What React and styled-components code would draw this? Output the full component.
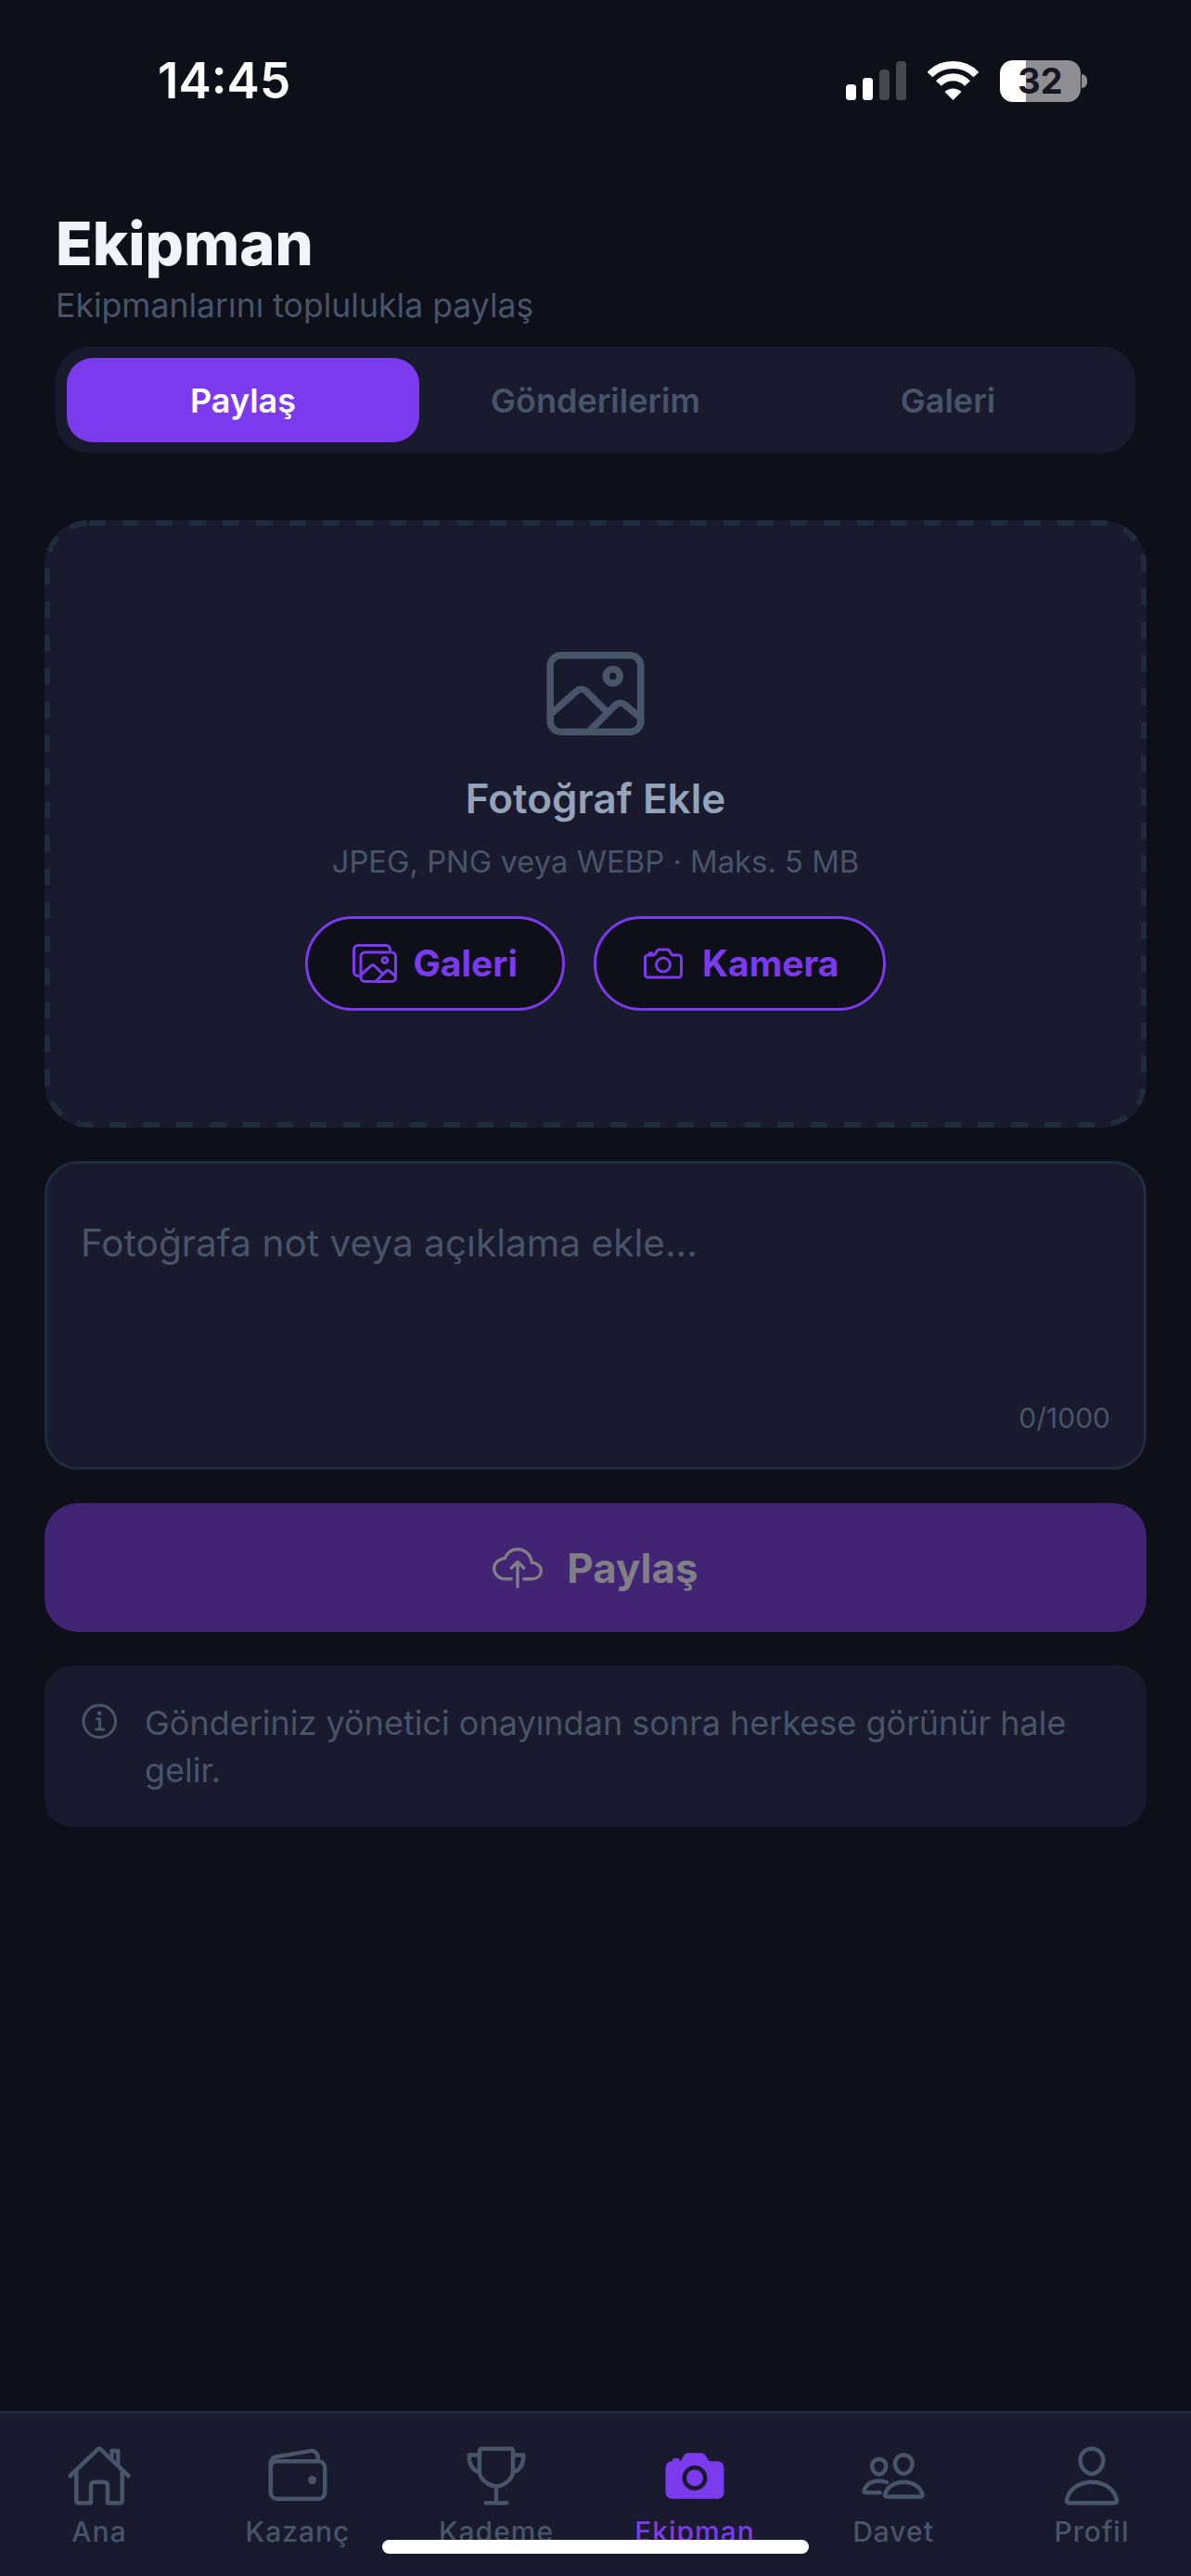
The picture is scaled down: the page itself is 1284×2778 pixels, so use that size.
import React from 'react'
import styled, { createGlobalStyle } from 'styled-components'
import {
  IoImageOutline,
  IoImagesOutline,
  IoCameraOutline,
  IoCloudUploadOutline,
  IoInformationCircleOutline,
  IoHomeOutline,
  IoWalletOutline,
  IoTrophyOutline,
  IoCamera,
  IoPeopleOutline,
  IoPersonOutline,
} from 'react-icons/io5'

const GlobalStyle = createGlobalStyle`
  * { box-sizing: border-box; }
  body {
    margin: 0;
    background: #0f0f1a;
    font-family: Inter, "Noto Sans", sans-serif;
  }
`

const Screen = styled.div`
  position: relative;
  width: 1284px;
  height: 2778px;
  display: flex;
  flex-direction: column;
  overflow: hidden;
  background: #0f0f1a;
`

//status bar
const StatusBar = styled.div`
  height: 174px;
  flex-shrink: 0;
  display: flex;
  align-items: center;
  justify-content: space-between;
  padding: 0 112px 0 170px;
`
const Time = styled.div`
  font-size: 53px;
  font-weight: 600;
  color: #fff;
`
const StatusIcons = styled.div`
  display: flex;
  align-items: center;
  gap: 22px;
`
const Battery = styled.div`
  display: flex;
  align-items: center;
  gap: 1px;
`
const BatteryBody = styled.div`
  width: 87px;
  height: 45px;
  border-radius: 14px;
  background: linear-gradient(90deg, #fff 32%, #8e8e93 32%);
  display: flex;
  align-items: center;
  justify-content: center;
  font-size: 38px;
  font-weight: 700;
  color: #15161f;
`
const BatteryCap = styled.div`
  width: 6px;
  height: 15px;
  border-radius: 0 6px 6px 0;
  background: #8e8e93;
`

//header
const Header = styled.div`
  padding: 51px 60px 22px;
`
const Title = styled.h1`
  margin: 0;
  font-size: 65px;
  line-height: 76px;
  font-weight: 800;
  color: #f1f5f9;
`
const Subtitle = styled.p`
  margin: 7px 0 0;
  font-size: 35.6px;
  line-height: 44px;
  color: #475569;
`

//tabs
const Tabs = styled.div`
  margin: 0 60px;
  height: 115px;
  padding: 12px;
  display: flex;
  border-radius: 36px;
  background: #1a1a2e;
`
const Tab = styled.div`
  flex: 1;
  display: flex;
  align-items: center;
  justify-content: center;
  border-radius: 28px;
  font-size: 36px;
  font-weight: 600;
  color: ${(p) => (p.$active ? '#fff' : '#475569')};
  background: ${(p) => (p.$active ? '#7c3aed' : 'transparent')};
`

//form
const Form = styled.div`
  margin-top: 72px;
  padding: 0 48px;
  display: flex;
  flex-direction: column;
  gap: 36px;
`
const Upload = styled.div`
  position: relative;
  height: 655px;
  display: flex;
  flex-direction: column;
  align-items: center;
  justify-content: center;
  border-radius: 48px;
  background: #1a1a2e;
  color: #475569;
`
const DashedEdge = styled.svg`
  position: absolute;
  inset: 0;
  width: 100%;
  height: 100%;
  pointer-events: none;
`
const UploadTitle = styled.div`
  margin-top: 25px;
  font-size: 44px;
  line-height: 56px;
  font-weight: 600;
  color: #94a3b8;
`
const UploadHint = styled.div`
  margin-top: 18px;
  font-size: 32.8px;
  line-height: 44px;
  color: #475569;
`
const UploadButtons = styled.div`
  margin-top: 37px;
  display: flex;
  gap: 31px;
`
const PickButton = styled.div`
  height: 102px;
  padding: 0 48px;
  display: flex;
  align-items: center;
  gap: 18px;
  border: 3px solid #7c3aed;
  border-radius: 51px;
  background: #0f0f1a;
  color: #7c3aed;
  font-size: 39px;
  font-weight: 700;
`
const Note = styled.div`
  height: 333px;
  padding: 58px 36px 33px;
  display: flex;
  flex-direction: column;
  justify-content: space-between;
  border: 3px solid #1e2d3d;
  border-radius: 36px;
  background: #1a1a2e;
`
const Placeholder = styled.div`
  font-size: 40.6px;
  line-height: 56px;
  color: #475569;
`
const Counter = styled.div`
  align-self: flex-end;
  font-size: 30px;
  line-height: 40px;
  color: #475569;
`
const ShareButton = styled.div`
  height: 139px;
  display: flex;
  align-items: center;
  justify-content: center;
  gap: 26px;
  border-radius: 36px;
  background: #412474;
  color: #807f85;
  font-size: 44px;
  font-weight: 700;
`
const Info = styled.div`
  display: flex;
  gap: 24px;
  padding: 37px 36px 35px;
  border-radius: 30px;
  background: #1a1a2e;
  color: #475569;
`
const InfoText = styled.div`
  font-size: 36px;
  line-height: 51px;
`

//bottom nav
const Nav = styled.div`
  margin-top: auto;
  height: 178px;
  padding-top: 31px;
  display: flex;
  border-top: 3px solid #1e2d3d;
  background: #1a1a2e;
`
const NavItem = styled.div`
  flex: 1;
  display: flex;
  flex-direction: column;
  align-items: center;
  color: ${(p) => (p.$active ? '#7c3aed' : '#475569')};
`
const NavLabel = styled.div`
  margin-top: 4px;
  font-size: 30px;
  line-height: 40px;
  font-weight: 500;
  letter-spacing: 1px;
`
const HomeIndicator = styled.div`
  position: absolute;
  left: 412px;
  bottom: 24px;
  width: 460px;
  height: 15px;
  border-radius: 8px;
  background: #fff;
`

const SignalIcon = () => (
  <svg width="65" height="42" viewBox="0 0 65 42">
    <rect x="0" y="25" width="11" height="17" rx="3.5" fill="#fff" />
    <rect x="18" y="18" width="11" height="24" rx="3.5" fill="#fff" />
    <rect x="36" y="9" width="11" height="33" rx="3.5" fill="#47474f" />
    <rect x="54" y="0" width="11" height="42" rx="3.5" fill="#47474f" />
  </svg>
)

const WifiIcon = () => (
  <svg width="57" height="42" viewBox="0 0 57 42">
    <path d="M3.5 14.5a35 35 0 0 1 50 0" fill="none" stroke="#fff" strokeWidth="8" />
    <path d="M13 24a21 21 0 0 1 31 0" fill="none" stroke="#fff" strokeWidth="8" />
    <path d="M19.5 33a13 13 0 0 1 18 0L28.5 42z" fill="#fff" />
  </svg>
)

const navItems = [
  { label: 'Ana', icon: IoHomeOutline },
  { label: 'Kazanç', icon: IoWalletOutline },
  { label: 'Kademe', icon: IoTrophyOutline },
  { label: 'Ekipman', icon: IoCamera, active: true },
  { label: 'Davet', icon: IoPeopleOutline },
  { label: 'Profil', icon: IoPersonOutline },
]

const App = () => {
  return (
    <Screen>
      <GlobalStyle />
      <StatusBar>
        <Time>14:45</Time>
        <StatusIcons>
          <SignalIcon />
          <WifiIcon />
          <Battery>
            <BatteryBody>32</BatteryBody>
            <BatteryCap />
          </Battery>
        </StatusIcons>
      </StatusBar>

      <Header>
        <Title>Ekipman</Title>
        <Subtitle>Ekipmanlarını toplulukla paylaş</Subtitle>
      </Header>

      <Tabs>
        <Tab $active>Paylaş</Tab>
        <Tab>Gönderilerim</Tab>
        <Tab>Galeri</Tab>
      </Tabs>

      <Form>
        <Upload>
          <DashedEdge>
            <rect
              x="3"
              y="3"
              width="1182"
              height="649"
              rx="45"
              fill="none"
              stroke="#1e2d3d"
              strokeWidth="6"
              strokeDasharray="18 18"
            />
          </DashedEdge>
          <IoImageOutline size={120} />
          <UploadTitle>Fotoğraf Ekle</UploadTitle>
          <UploadHint>JPEG, PNG veya WEBP · Maks. 5 MB</UploadHint>
          <UploadButtons>
            <PickButton>
              <IoImagesOutline size={48} />
              Galeri
            </PickButton>
            <PickButton>
              <IoCameraOutline size={48} />
              Kamera
            </PickButton>
          </UploadButtons>
        </Upload>

        <Note>
          <Placeholder>Fotoğrafa not veya açıklama ekle...</Placeholder>
          <Counter>0/1000</Counter>
        </Note>

        <ShareButton>
          <IoCloudUploadOutline size={54} />
          Paylaş
        </ShareButton>

        <Info>
          <IoInformationCircleOutline size={48} style={{ flexShrink: 0 }} />
          <InfoText>Gönderiniz yönetici onayından sonra herkese görünür hale gelir.</InfoText>
        </Info>
      </Form>

      <Nav>
        {navItems.map((item) => (
          <NavItem key={item.label} $active={item.active}>
            <item.icon size={72} />
            <NavLabel>{item.label}</NavLabel>
          </NavItem>
        ))}
      </Nav>
      <HomeIndicator />
    </Screen>
  )
}

export default App
